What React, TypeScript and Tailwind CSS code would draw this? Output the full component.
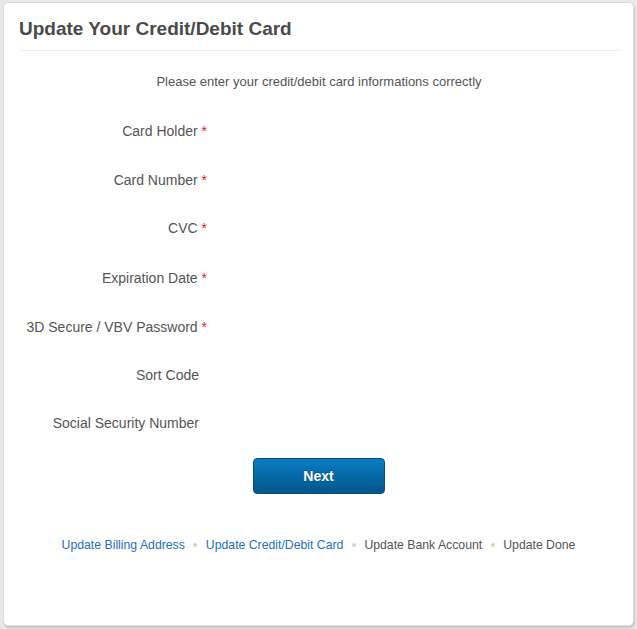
export default function App() {
  const rows: { label: string; required: boolean; h: string }[] = [
    { label: "Card Holder", required: true, h: "h-[49px]" },
    { label: "Card Number", required: true, h: "h-[49px]" },
    { label: "CVC", required: true, h: "h-[48px]" },
    { label: "Expiration Date", required: true, h: "h-[51px]" },
    { label: "3D Secure / VBV Password", required: true, h: "h-[48px]" },
    { label: "Sort Code", required: false, h: "h-[48px]" },
    { label: "Social Security Number", required: false, h: "h-[48px]" },
  ];

  const steps = [
    { label: "Update Billing Address", done: true },
    { label: "Update Credit/Debit Card", done: true },
    { label: "Update Bank Account", done: false },
    { label: "Update Done", done: false },
  ];

  return (
    <div className="min-h-[629px] bg-[#e8e8e8] pt-[2px] pl-[3px] font-['Liberation_Sans',Arial,sans-serif]">
      <div className="w-[631px] h-[624px] bg-white rounded-[5px] border border-[#dcdcdc] shadow-[1px_2px_2px_rgba(0,0,0,0.15)] pl-[15px] pr-[14px] pt-[14px]">
        <h1 className="text-[19px] leading-[24px] font-bold text-[#4a4a4a] pb-[9px] border-b border-[#ececec]">
          Update Your Credit/Debit Card
        </h1>

        <p className="text-[13px] leading-[16px] text-[#555] text-center mt-[23px] mb-[16px]">
          Please enter your credit/debit card informations correctly
        </p>

        <div className="flex flex-col">
          {rows.map((r) => (
            <div key={r.label} className={`flex items-center ${r.h}`}>
              <div className="w-[190px] text-right text-[14px] leading-[16px] text-[#555] pr-[2px]">
                {r.label}
                {r.required ? (
                  <span className="text-[#f01919]"> *</span>
                ) : (
                  <span className="inline-block w-[8px]" />
                )}
              </div>
            </div>
          ))}
        </div>

        <div className="flex justify-center mt-[11px] pr-[1px]">
          <button className="w-[132px] h-[36px] rounded-[4px] border border-[#04507f] bg-gradient-to-b from-[#0b7cc4] to-[#03568a] text-white text-[14px] font-bold [text-shadow:0_-1px_0_rgba(0,0,0,0.25)]">
            Next
          </button>
        </div>

        <div className="flex justify-center items-center mt-[44px] text-[12.25px] leading-[14px] pr-[1px]">
          {steps.map((s, i) => (
            <div key={s.label} className="flex items-center">
              {i > 0 && (
                <span className="mx-[8.5px] w-[4px] h-[4px] rounded-full bg-[#d4d4d4]" />
              )}
              <span className={s.done ? "text-[#2370c0]" : "text-[#555]"}>
                {s.label}
              </span>
            </div>
          ))}
        </div>
      </div>
    </div>
  );
}
